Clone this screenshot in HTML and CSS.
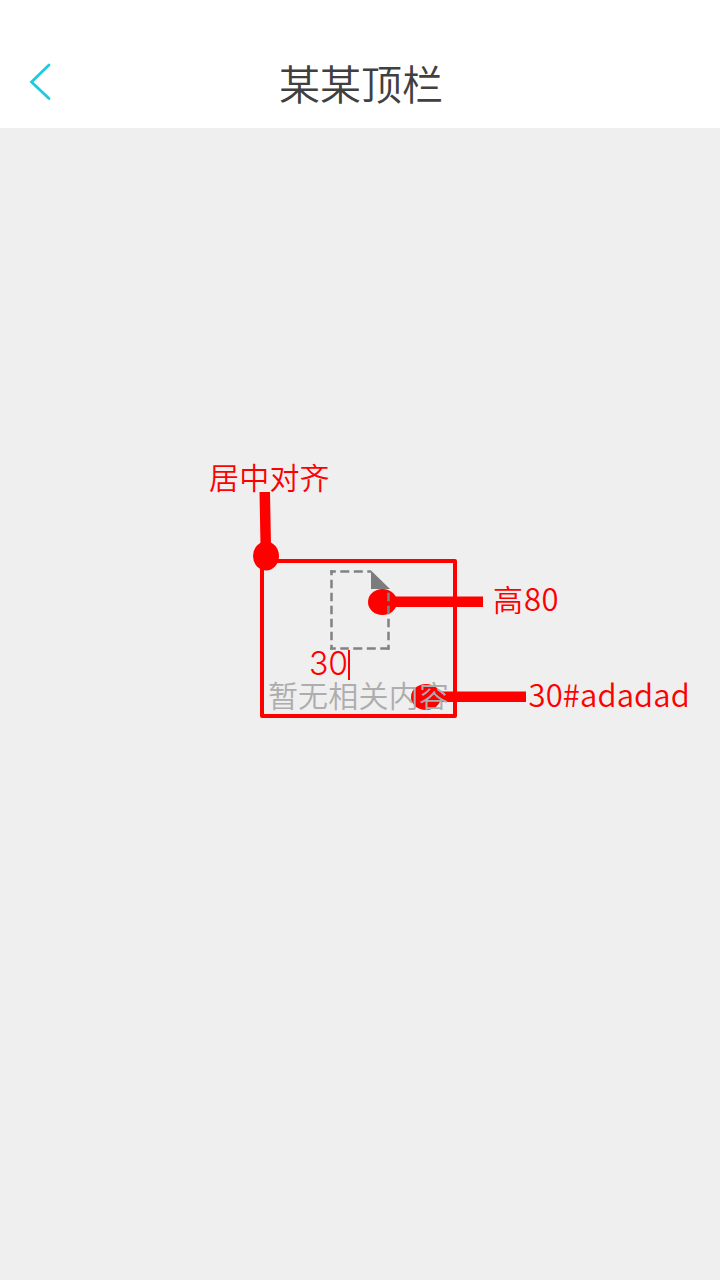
FILE: index.html
```html
<!DOCTYPE html>
<html lang="zh-CN">
<head>
<meta charset="utf-8">
<title>某某顶栏</title>
<link rel="stylesheet" href="styles.css">
</head>
<body>
<div class="screen">
  <header class="topbar">
    <svg class="back" viewBox="0 0 24 40" width="24" height="40"><path d="M21 3 L3.500 20 L21 36.500"/></svg>
    <h1 class="title">某某顶栏</h1>
  </header>
  <main class="content">
    <section class="empty">
      <svg class="doc" viewBox="0 0 60 80" width="60" height="80">
        <path class="doc-line doc-edge-top" d="M0.300 1.500 H41"/>
        <path class="doc-line doc-edge-left" d="M1.500 0.300 V79.700"/>
        <path class="doc-line doc-edge-bottom" d="M0.300 78.500 H59.700"/>
        <path class="doc-line doc-edge-right" d="M58.500 79.700 V19"/>
        <path class="doc-fold" d="M41 0.500 L60 19 H41 Z"/>
      </svg>
      <span class="gap">30</span>
      <p class="message">暂无相关内容</p>
    </section>
  </main>
  <svg class="leaders" viewBox="0 0 720 1280" width="720" height="1280">
    <path d="M259.500 492 H270 L271 545 H260.500 Z"/>
    <ellipse cx="266" cy="556" rx="13" ry="14.500"/>
    <path d="M390 597 L396 596.500 H483 V607 H390 Z"/>
    <ellipse cx="382.500" cy="602" rx="14.500" ry="13"/>
    <path d="M435 691.500 H526 V702 H435 Z"/>
    <ellipse cx="426" cy="697" rx="15" ry="13"/>
  </svg>
  <span class="note note-align">居中对齐</span>
  <span class="note note-height">高<span class="digits">80</span></span>
  <span class="note note-color">30#adadad</span>
</div>
</body>
</html>
```
FILE: styles.css
```css
* { box-sizing: border-box; }
body {
  margin: 0;
  font-family: "Noto Sans CJK SC", "Noto Sans", sans-serif;
}
.screen {
  position: relative;
  isolation: isolate;
  display: flex;
  flex-direction: column;
  width: 720px;
  height: 1280px;
  overflow: hidden;
  background: #efefef;
}
.topbar {
  display: grid;
  grid-template-columns: 52px 1fr 52px;
  align-items: center;
  height: 128px;
  padding: 38px 0 2px;
  background: #ffffff;
}
.back {
  margin: 0 0 0 28px;
  fill: none;
  stroke: #1ccbe0;
  stroke-width: 2.800;
  stroke-linecap: round;
}
.title {
  margin: 0 0 0 2px;
  color: #404040;
  font-size: 41px;
  font-weight: 350;
  line-height: 60px;
  text-align: center;
}
.content {
  display: flex;
  justify-content: center;
  padding-top: 431px;
}
.empty {
  display: flex;
  flex-direction: column;
  align-items: center;
  width: 197px;
  height: 159px;
  margin-right: 3px;
  padding-top: 7px;
  border: 4px solid #ff0000;
  border-radius: 2px;
}
.doc {
  display: block;
  flex: none;
  margin-left: 3px;
}
.doc-line {
  fill: none;
  stroke: #828282;
  stroke-width: 2.500;
}
.doc-edge-top { stroke-dasharray: 5.500 4.500 9 4.500 9 4.500 9; }
.doc-edge-left { stroke-dasharray: 5 4.500 8.500 4.500 8.500 4.500 8.500 4.500 8.500 4.500 8.500 4.500; }
.doc-edge-bottom { stroke-dasharray: 5.500 4.500 8.500 4.500 9 4.500 9 4.500 9; }
.doc-edge-right { stroke-dasharray: 5 4.500 8.500 4.500 8.500 4.500 8.500 4.500 8.500 4.500; }
.doc-fold { fill: #7c7c7c; }
.gap {
  height: 30px;
  margin-right: 58px;
  border-right: 2px solid #ff0000;
  color: #ff0000;
  font-family: Inter, sans-serif;
  font-size: 32px;
  font-weight: 300;
  line-height: 28px;
}
.message {
  margin: 0;
  color: #adadad;
  font-size: 30px;
  font-weight: 350;
  line-height: 28px;
  letter-spacing: 0.2px;
  white-space: nowrap;
}
.leaders {
  position: absolute;
  z-index: -1;
  inset: 0;
  fill: #ff0000;
}
.note {
  position: absolute;
  color: #ff0000;
  font-size: 30px;
  font-weight: 350;
  line-height: 36px;
  white-space: nowrap;
}
.note-align { left: 209px; top: 458px; letter-spacing: 0.2px; }
.note-height { left: 493px; top: 580px; }
.digits { margin-left: 1px; font-size: 31px; letter-spacing: 0.4px; }
.note-color { left: 528.5px; top: 676px; font-size: 31px; letter-spacing: 0.15px; }
```
